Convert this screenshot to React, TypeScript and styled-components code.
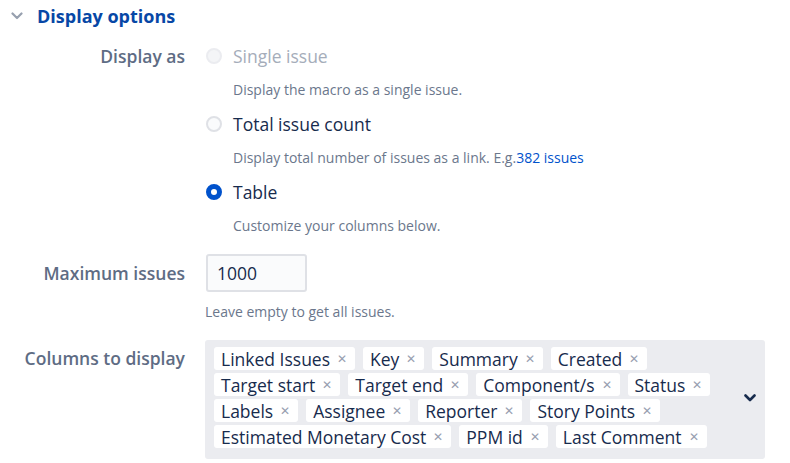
import React from 'react';
import styled, { createGlobalStyle } from 'styled-components';

const GlobalStyle = createGlobalStyle`
  html, body {
    margin: 0;
    padding: 0;
    background: #ffffff;
  }
  body {
    font-family: "Open Sans", "Liberation Sans", sans-serif;
    color: #172b4d;
  }
`;

const Page = styled.div`
  width: 790px;
  height: 463px;
  padding-top: 4px;
  box-sizing: border-box;
  overflow: hidden;
`;

const SectionHeader = styled.div`
  display: flex;
  align-items: center;
  height: 24px;
  padding-left: 11px;
  gap: 14px;
`;

const HeaderTitle = styled.span`
  font-size: 18px;
  font-weight: 700;
  color: #0747a6;
`;

const Form = styled.div`
  display: grid;
  grid-template-columns: 185px 1fr;
  column-gap: 20px;
  margin-top: 16px;
`;

const Label = styled.div<{ $top?: number }>`
  text-align: right;
  font-size: 17.5px;
  font-weight: 600;
  color: #5e6c84;
  line-height: 24px;
  padding-top: ${p => p.$top ?? 0}px;
`;

const Field = styled.div<{ $bottom?: number }>`
  display: flex;
  flex-direction: column;
  align-items: flex-start;
  margin-bottom: ${p => p.$bottom ?? 0}px;
`;

const Options = styled.div`
  display: flex;
  flex-direction: column;
  gap: 12px;
`;

const OptionRow = styled.label<{ $disabled?: boolean }>`
  display: flex;
  align-items: center;
  gap: 11px;
  height: 24px;
  font-size: 17.5px;
  color: ${p => (p.$disabled ? '#a5adba' : '#172b4d')};
`;

const Radio = styled.span<{ $checked?: boolean; $disabled?: boolean }>`
  width: 16px;
  height: 16px;
  box-sizing: border-box;
  border-radius: 50%;
  margin-left: 1px;
  background: ${p => (p.$checked ? '#ffffff' : p.$disabled ? '#f4f5f7' : '#fafbfc')};
  border: ${p =>
    p.$checked ? '5px solid #0052cc' : p.$disabled ? '2px solid #ebecf0' : '2px solid #dfe1e6'};
`;

const Help = styled.div<{ $indent?: number; $top?: number }>`
  font-size: 14px;
  line-height: 20px;
  color: #6b778c;
  padding-left: ${p => p.$indent ?? 0}px;
  margin-top: ${p => p.$top ?? 0}px;
`;

const Link = styled.a`
  color: #0052cc;
  text-decoration: none;
`;

const TextInput = styled.input`
  width: 101px;
  height: 38px;
  box-sizing: border-box;
  border: 2px solid #dfe1e6;
  border-radius: 3px;
  background: #fafbfc;
  padding: 0 9px;
  font-family: inherit;
  font-size: 17.5px;
  color: #172b4d;
  outline: none;
  margin-left: 1px;
`;

const MultiSelect = styled.div`
  width: 560px;
  box-sizing: border-box;
  background: #ebecf0;
  border-radius: 3px;
  padding: 7px 0 11px 9px;
  display: flex;
  align-items: center;
`;

const Chips = styled.div`
  flex: 1;
  display: flex;
  flex-wrap: wrap;
  gap: 3px 8px;
`;

const Chip = styled.span`
  display: inline-flex;
  align-items: center;
  height: 23px;
  padding: 0 8px 0 7px;
  gap: 7px;
  background: #ffffff;
  border-radius: 3px;
  font-size: 17.5px;
  color: #172b4d;
`;

const Remove = styled.span`
  font-size: 12px;
  color: #97a0af;
`;

const Toggle = styled.div`
  width: 30px;
  display: flex;
  justify-content: center;
`;

const Chevron = ({ color, weight }: { color: string; weight: number }) => (
  <svg width={12} height={8} viewBox="0 0 12 8" fill="none">
    <path d="M1.5 1.5L6 6l4.5-4.5" stroke={color} strokeWidth={weight} strokeLinecap="round" strokeLinejoin="round" />
  </svg>
);

const columns = [
  'Linked Issues',
  'Key',
  'Summary',
  'Created',
  'Target start',
  'Target end',
  'Component/s',
  'Status',
  'Labels',
  'Assignee',
  'Reporter',
  'Story Points',
  'Estimated Monetary Cost',
  'PPM id',
  'Last Comment',
];

const App = () => (
  <Page>
    <GlobalStyle />
    <SectionHeader>
      <Chevron color="#97a0af" weight={2.2} />
      <HeaderTitle>Display options</HeaderTitle>
    </SectionHeader>

    <Form>
      <Label>Display as</Label>
      <Field $bottom={18}>
        <Options>
          <OptionRow $disabled>
            <Radio $disabled />
            Single issue
          </OptionRow>
          <Help $indent={28}>Display the macro as a single issue.</Help>
          <OptionRow>
            <Radio />
            Total issue count
          </OptionRow>
          <Help $indent={28}>
            Display total number of issues as a link. E.g.<Link href="#">382 issues</Link>
          </Help>
          <OptionRow>
            <Radio $checked />
            Table
          </OptionRow>
          <Help $indent={28}>Customize your columns below.</Help>
        </Options>
      </Field>

      <Label $top={7}>Maximum issues</Label>
      <Field $bottom={18}>
        <TextInput defaultValue="1000" />
        <Help $top={10}>Leave empty to get all issues.</Help>
      </Field>

      <Label $top={6}>Columns to display</Label>
      <Field>
        <MultiSelect>
          <Chips>
            {columns.map(c => (
              <Chip key={c}>
                {c}
                <Remove>✕</Remove>
              </Chip>
            ))}
          </Chips>
          <Toggle>
            <Chevron color="#172b4d" weight={2.6} />
          </Toggle>
        </MultiSelect>
      </Field>
    </Form>
  </Page>
);

export default App;
